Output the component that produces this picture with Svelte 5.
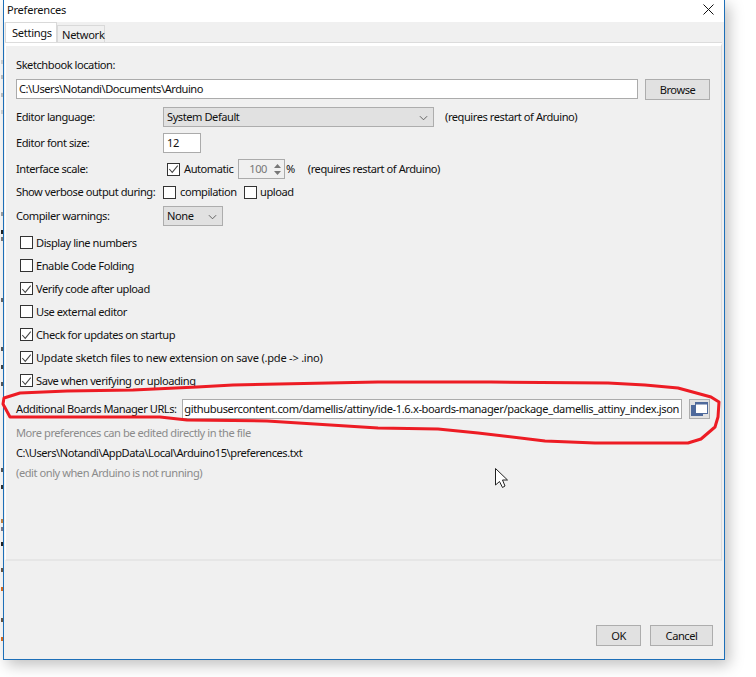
<script>
  const options = [
    { label: 'Display line numbers', checked: false },
    { label: 'Enable Code Folding', checked: false },
    { label: 'Verify code after upload', checked: true },
    { label: 'Use external editor', checked: false },
    { label: 'Check for updates on startup', checked: true },
    { label: 'Update sketch files to new extension on save (.pde -> .ino)', checked: true, wide: true },
    { label: 'Save when verifying or uploading', checked: true }
  ];

  // bits of the editor text that stick out left of the dialog
  const scraps = [
    [60, '#ccc'], [75, '#bbb'], [93, '#bbb'], [110, '#ccc'], [212, '#999'], [230, '#222'],
    [237, '#777'], [298, '#666'], [347, '#555'], [365, '#444'], [382, '#555'], [468, '#555'],
    [485, '#333'], [519, '#c08040'], [527, '#778'], [542, '#222'], [568, '#654'], [587, '#d2691e'],
    [618, '#654'], [637, '#d2691e']
  ];
</script>

{#snippet check(on)}
  <span class="box">
    {#if on}
      <svg viewBox="0 0 13 13" width="12" height="12"><path d="M1.5 6.5 5 10.5 11.5 2.5" fill="none" stroke="#444" stroke-width="1.2" /></svg>
    {/if}
  </span>
{/snippet}

{#snippet chevron()}
  <svg class="chev" viewBox="0 0 10 6" width="9" height="6"><path d="M1 1 5 5 9 1" fill="none" stroke="#555" stroke-width="1" /></svg>
{/snippet}

<div class="page">
  <div class="window">
    <div class="titlebar">
      <span>Preferences</span>
      <svg class="close" viewBox="0 0 11 11" width="11" height="11"><path d="M.5.5 10.5 10.5M10.5.5.5 10.5" stroke="#111" stroke-width="1" /></svg>
    </div>

    <div class="tabs">
      <div class="tab active">Settings</div>
      <div class="tab">Network</div>
    </div>

    <div class="panel">
      <div class="label-row">Sketchbook location:</div>
      <div class="row mt5">
        <div class="field sketch">C:\Users\Notandi\Documents\Arduino</div>
        <button class="btn browse">Browse</button>
      </div>

      <div class="row mt8">
        <span class="name">Editor language:</span>
        <div class="select lang">System Default {@render chevron()}</div>
        <span class="hint">(requires restart of Arduino)</span>
      </div>

      <div class="row mt6">
        <span class="name">Editor font size:</span>
        <div class="field size">12</div>
      </div>

      <div class="row mt6">
        <span class="name">Interface scale:</span>
        <span class="auto">{@render check(true)}<span>Automatic</span></span>
        <div class="spinner">
          <span class="num">100</span>
          <span class="arrows">
            <svg viewBox="0 0 7 4" width="7" height="4"><path d="M0 4 3.5 0 7 4z" fill="#777" /></svg>
            <svg viewBox="0 0 7 4" width="7" height="4"><path d="M0 0 3.5 4 7 0z" fill="#777" /></svg>
          </span>
        </div>
        <span class="pct">%</span>
        <span class="hint2">(requires restart of Arduino)</span>
      </div>

      <div class="row mt3">
        <span class="name">Show verbose output during:</span>
        <span class="pair compile">{@render check(false)}<span>compilation</span></span>
        <span class="pair">{@render check(false)}<span>upload</span></span>
      </div>

      <div class="row mt4">
        <span class="name">Compiler warnings:</span>
        <div class="select warn">None {@render chevron()}</div>
      </div>

      <ul class="options">
        {#each options as o}
          <li class:wide={o.wide}>{@render check(o.checked)}<span>{o.label}</span></li>
        {/each}
      </ul>

      <div class="row mt7">
        <span class="urls-label">Additional Boards Manager URLs:</span>
        <div class="field urls"><span>githubusercontent.com/damellis/attiny/ide-1.6.x-boards-manager/package_damellis_attiny_index.json</span></div>
        <button class="btn extra" aria-label="Open list">
          <svg viewBox="0 0 17 15" width="17" height="15">
            <rect x="0" y="3" width="12" height="11" fill="#4f6a9c" />
            <rect x="4.5" y="0.5" width="12" height="11" fill="#fff" stroke="#4f6a9c" />
            <rect x="4.5" y="0.5" width="12" height="2" fill="#4f6a9c" />
          </svg>
        </button>
      </div>

      <div class="note mt5">More preferences can be edited directly in the file</div>
      <div class="path mt2">C:\Users\Notandi\AppData\Local\Arduino15\preferences.txt</div>
      <div class="note mt2">(edit only when Arduino is not running)</div>
    </div>

    <div class="footer">
      <button class="btn ok">OK</button>
      <button class="btn cancel">Cancel</button>
    </div>
  </div>

  <!-- annotation drawn over the screenshot -->
  <svg class="overlay" viewBox="0 0 756 677" width="756" height="677">
    {#each scraps as [y, c]}
      <rect x="1" {y} width="2" height="4" fill={c} />
    {/each}
    <path d="M378 382 233 385 197 387 133 390 67 391 20 393 4 398 3 404 10 417 67 417 160 417 187 420 267 421 378 428 438 429 478 433 545 441 595 443 688 443 701 439 715 427 718 417 719 402 711 397 678 388 645 385 608 383 491 382Z"
      fill="none" stroke="#ed1c24" stroke-width="3" stroke-linejoin="round" />
    <path d="M495.5 468.5V485L499.5 481.5 502.5 487.5 505 486 502.5 480H507.5Z" fill="#fff" stroke="#222" stroke-width="1" />
  </svg>
</div>

<style>
  :global(body) {
    margin: 0;
    background: #fff;
  }

  .page {
    position: relative;
    width: 756px;
    height: 677px;
    overflow: hidden;
    background: #fff;
    font: 11.1px "Noto Sans", sans-serif;
    letter-spacing: -0.45px;
    color: #111;
  }

  .window {
    box-sizing: border-box;
    width: 722px;
    height: 660px;
    margin-left: 3px;
    display: flex;
    flex-direction: column;
    background: #f0f0f0;
    border: 1px solid #1d6fb8;
    border-top: 0;
    box-shadow: 4px 5px 14px rgba(0, 0, 0, 0.25);
  }

  .titlebar {
    height: 22px;
    flex: none;
    display: flex;
    align-items: center;
    justify-content: space-between;
    padding: 0 10px 3px 3px;
    box-sizing: border-box;
    background: #fff;
    letter-spacing: -0.24px;
  }

  .tabs {
    height: 21px;
    flex: none;
    display: flex;
    align-items: flex-end;
    padding-left: 1px;
    letter-spacing: -0.3px;
  }

  .tab {
    box-sizing: border-box;
    width: 48px;
    height: 18px;
    padding: 0 4px;
    line-height: 17px;
    background: #f0f0f0;
    border: 1px solid #d9d9d9;
    border-bottom: 0;
  }

  .tab.active {
    height: 21px;
    width: 52px;
    padding: 0 6px;
    line-height: 20px;
    background: #fff;
  }

  .panel {
    box-sizing: border-box;
    height: 518px;
    flex: none;
    margin: 0 2px 0 1px;
    padding: 10px 10px 0 10px;
    border: 1px solid #dcdcdc;
    border-left-color: #fff;
    border-bottom: 2px solid #e6e6e6;
    border-top: 3px solid #fff;
    box-shadow: 0 -1px 0 #dcdcdc;
  }

  .label-row {
    height: 18px;
    line-height: 18px;
  }

  .row {
    height: 20px;
    display: flex;
    align-items: center;
    white-space: nowrap;
  }

  .mt2 { margin-top: 2px; }
  .mt3 { margin-top: 3px; }
  .mt4 { margin-top: 4px; }
  .mt5 { margin-top: 5px; }
  .mt6 { margin-top: 6px; }
  .mt7 { margin-top: 7px; }
  .mt8 { margin-top: 8px; }

  .name,
  .hint,
  .hint2,
  .pct,
  .num,
  .urls-label,
  .auto > span:last-child,
  .pair > span:last-child {
    padding-bottom: 2px;
  }

  .name {
    width: 147px;
    flex: none;
  }

  .field {
    box-sizing: border-box;
    height: 20px;
    line-height: 18px;
    padding: 0 2px;
    background: #fff;
    border: 1px solid #ababab;
    overflow: hidden;
    white-space: nowrap;
  }

  .sketch {
    width: 622px;
    flex: none;
  }

  .size {
    width: 38px;
    padding-left: 3px;
  }

  .btn {
    box-sizing: border-box;
    font: inherit;
    letter-spacing: inherit;
    color: inherit;
    padding: 0;
    background: #e1e1e1;
    border: 1px solid #adadad;
  }

  .browse {
    width: 65px;
    height: 21px;
    margin-left: 7px;
  }

  .select {
    box-sizing: border-box;
    height: 20px;
    line-height: 18px;
    padding: 0 3px;
    position: relative;
    background: #e1e1e1;
    border: 1px solid #adadad;
  }

  .lang { width: 271px; }
  .warn { width: 60px; }

  .chev {
    position: absolute;
    right: 5px;
    top: 7px;
  }

  .hint {
    margin-left: 11px;
  }

  .auto,
  .pair,
  .options li {
    display: flex;
    align-items: center;
  }

  .auto {
    margin-left: 4px;
    width: 71px;
    flex: none;
  }

  .box {
    box-sizing: border-box;
    width: 13px;
    height: 13px;
    flex: none;
    margin-right: 3px;
    display: flex;
    align-items: center;
    justify-content: center;
    background: #fff;
    border: 1px solid #333;
  }

  .auto .box,
  .compile .box {
    margin-right: 4px;
  }

  .spinner {
    box-sizing: border-box;
    width: 47px;
    height: 20px;
    display: flex;
    align-items: center;
    justify-content: flex-end;
    background: #f0f0f0;
    border: 1px solid #ababab;
  }

  .num {
    color: #777;
    margin-right: 3px;
  }

  .arrows {
    width: 14px;
    display: flex;
    flex-direction: column;
    align-items: center;
    gap: 3px;
  }

  .pct {
    margin-left: 1px;
  }

  .hint2 {
    margin-left: 13px;
  }

  .compile {
    width: 81px;
  }

  .options {
    list-style: none;
    margin: 5px 0 0;
    padding: 0 0 0 4px;
  }

  .options li {
    height: 23px;
  }

  .options li.wide {
    letter-spacing: -0.24px;
  }

  .urls-label {
    width: 166px;
    flex: none;
  }

  .urls {
    width: 500px;
    flex: none;
    display: flex;
    justify-content: flex-end;
    letter-spacing: -0.38px;
  }

  .extra {
    width: 21px;
    height: 20px;
    margin-left: 7px;
    display: flex;
    align-items: center;
    justify-content: center;
  }

  .note,
  .path {
    height: 18px;
    line-height: 18px;
  }

  .note {
    color: #8b8b8b;
  }

  .footer {
    flex: 1;
    display: flex;
    justify-content: flex-end;
    align-items: flex-start;
    gap: 9px;
    padding: 64px 11px 0 0;
  }

  .ok {
    width: 45px;
    height: 21px;
  }

  .cancel {
    width: 63px;
    height: 21px;
  }

  .overlay {
    position: absolute;
    inset: 0;
    pointer-events: none;
  }
</style>
